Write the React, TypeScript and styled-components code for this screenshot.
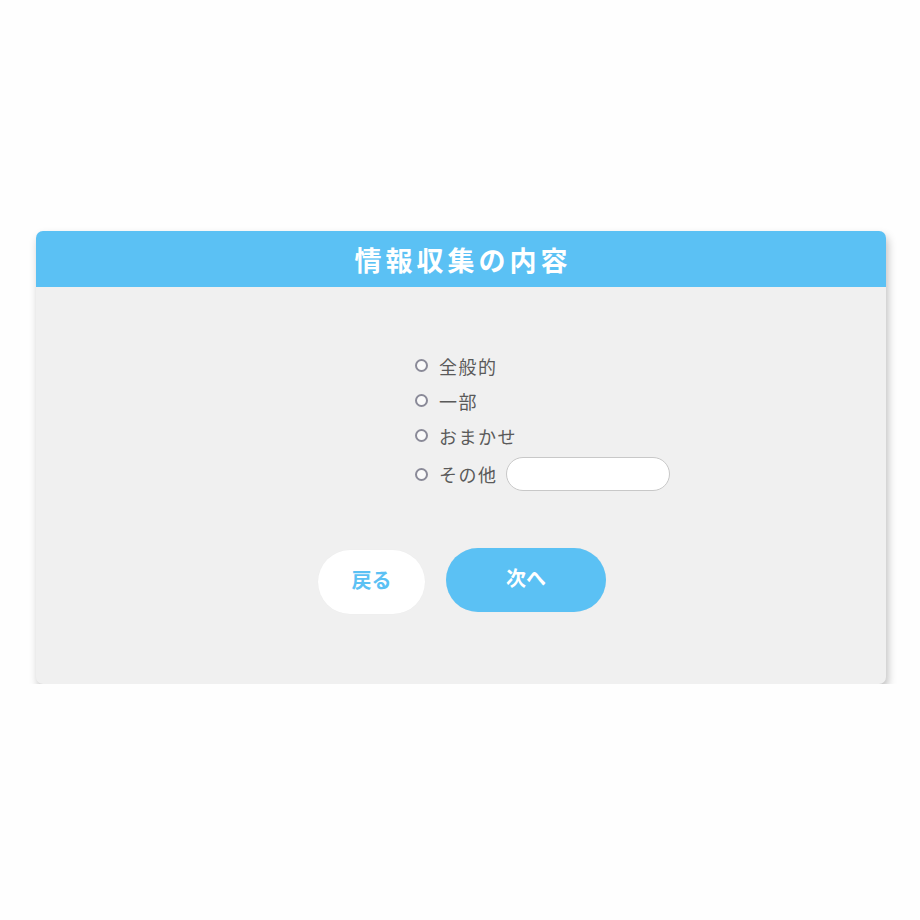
import React, { useState } from 'react';
import styled, { createGlobalStyle } from 'styled-components';

const GlobalStyle = createGlobalStyle`
  body {
    margin: 0;
    background: #fefefe;
    font-family: "Noto Sans CJK JP", "Noto Sans", sans-serif;
  }
`;

const Page = styled.div`
  padding: 231px 34px 0 36px;
`;

const Card = styled.div`
  background: #f0f0f0;
  border-radius: 7px;
  box-shadow: 2px 5px 9px rgba(0, 0, 0, 0.25);
  overflow: hidden;
`;

const Header = styled.h2`
  margin: 0;
  height: 56px;
  display: flex;
  align-items: center;
  justify-content: center;
  background: #5bc1f4;
  color: #fff;
  font-size: 27px;
  font-weight: 700;
  letter-spacing: 4px;
  padding-left: 4px;
`;

const Body = styled.div`
  padding: 61px 0 70px;
  display: flex;
  flex-direction: column;
`;

const Options = styled.div`
  margin-left: 379px;
  display: flex;
  flex-direction: column;
`;

const Row = styled.label<{ $tall?: boolean }>`
  display: flex;
  align-items: center;
  height: ${({ $tall }) => ($tall ? '42px' : '35px')};
  color: #5a5a5a;
  font-size: 18px;
  letter-spacing: 1.5px;
  cursor: pointer;
`;

const Radio = styled.span<{ $on: boolean }>`
  box-sizing: border-box;
  width: 13px;
  height: 13px;
  border-radius: 50%;
  border: 2px solid #8a8a98;
  background: ${({ $on }) => ($on ? '#5bc1f4' : '#fafafa')};
  margin-right: 11px;
  flex-shrink: 0;
`;

const OtherInput = styled.input`
  box-sizing: border-box;
  width: 164px;
  height: 34px;
  margin-left: 8px;
  border: 1px solid #c8c8c8;
  border-radius: 17px;
  background: #fff;
  outline: none;
  padding: 0 12px;
  font-size: 15px;
`;

const Buttons = styled.div`
  margin-top: 53px;
  display: flex;
  justify-content: center;
  gap: 21px;
  padding-left: 2px;
`;

const PillButton = styled.button<{ $primary?: boolean }>`
  height: 64px;
  width: ${({ $primary }) => ($primary ? '160px' : '107px')};
  margin-top: ${({ $primary }) => ($primary ? '0' : '2px')};
  padding: 0 0 5px;
  border: none;
  border-radius: 32px;
  background: ${({ $primary }) => ($primary ? '#5bc1f4' : '#ffffff')};
  color: ${({ $primary }) => ($primary ? '#ffffff' : '#5bc1f4')};
  box-shadow: 0 0 1px rgba(0, 0, 0, 0.05);
  font-family: inherit;
  font-size: 20px;
  font-weight: 700;
  cursor: pointer;
`;

const options = ['全般的', '一部', 'おまかせ'];

export default function App() {
  const [selected, setSelected] = useState<string | null>(null);
  const [other, setOther] = useState('');

  return (
    <>
      <GlobalStyle />
      <Page>
        <Card>
          <Header>情報収集の内容</Header>
          <Body>
            <Options>
              {options.map(o => (
                <Row key={o} onClick={() => setSelected(o)}>
                  <Radio $on={selected === o} />
                  {o}
                </Row>
              ))}
              <Row $tall onClick={() => setSelected('その他')}>
                <Radio $on={selected === 'その他'} />
                その他
                <OtherInput value={other} onChange={e => setOther(e.target.value)} />
              </Row>
            </Options>
            <Buttons>
              <PillButton>戻る</PillButton>
              <PillButton $primary>次へ</PillButton>
            </Buttons>
          </Body>
        </Card>
      </Page>
    </>
  );
}
